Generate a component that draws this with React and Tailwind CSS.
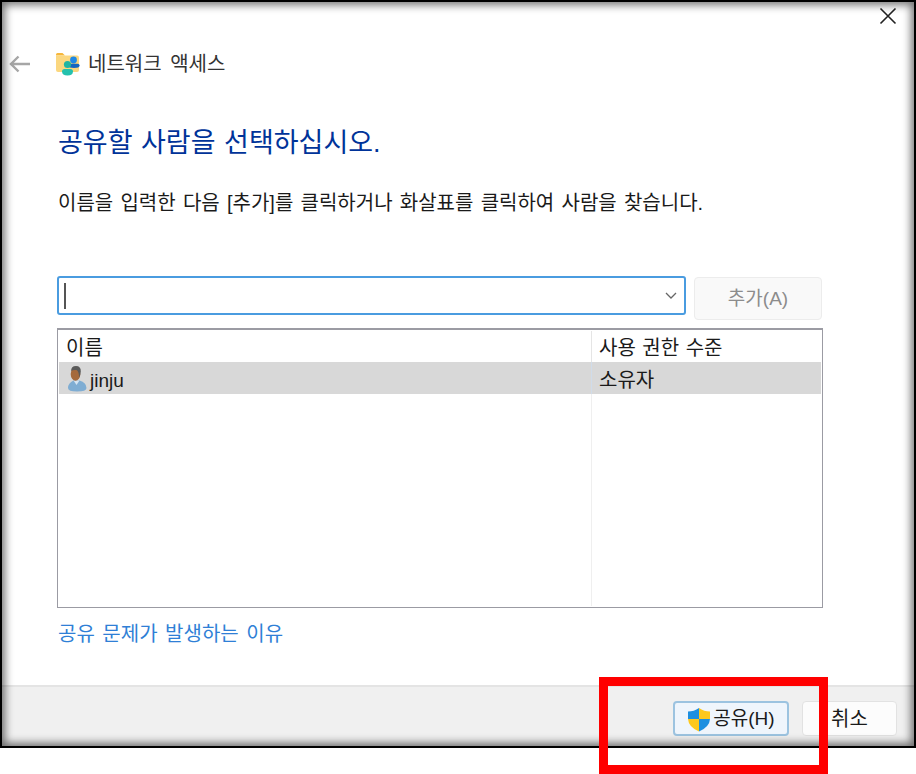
import React from "react";

const font = { fontFamily: '"Liberation Sans", "Noto Sans CJK KR", sans-serif' };

function FolderIcon() {
  return (
    <svg width="26" height="26" viewBox="0 0 26 26">
      <path d="M1 3.5Q1 2 2.5 2H7.5L10 4.5H1Z" fill="#f6b73c" />
      <path d="M1 4.5H22Q24 4.5 24 6.5V19Q24 21 22 21H3Q1 21 1 19Z" fill="#fbd77f" />
      <circle cx="18.5" cy="9" r="3.4" fill="#1e88e5" />
      <path d="M13.5 14.5Q13.5 12.8 15.5 12.8H22.5Q24.6 12.8 24.6 14.5Q24.6 17 19 17Q13.5 17 13.5 14.5Z" fill="#1565c0" />
      <circle cx="12.5" cy="13.5" r="3.6" fill="#1fb5a2" />
      <path d="M7 20.5Q7 18 9.5 18H15.5Q18 18 18 20.5Q18 24.5 12.5 24.5Q7 24.5 7 20.5Z" fill="#25c1ad" />
    </svg>
  );
}

function UserIcon() {
  return (
    <svg width="20" height="27" viewBox="0 0 20 27">
      <path d="M1 23Q1 18 6.5 15.5H12.5Q19.5 17.5 19.5 23Q19.5 26.5 10 26.5Q1 26.5 1 23Z" fill="#7fadd3" />
      <path d="M6.5 15.5L9.5 20L12.5 15.5Z" fill="#d4e4f2" />
      <ellipse cx="8.5" cy="9" rx="4.8" ry="6.8" fill="#a56a3c" />
      <path d="M4.2 6Q4 1 9 1Q14 1 13.8 6.5Q13.6 10 12 12.5Q12.2 6.5 9.5 5Q6 4.5 4.2 6Z" fill="#5a5a5a" />
    </svg>
  );
}

function ShieldIcon() {
  return (
    <svg width="24" height="25" viewBox="0 0 24 25">
      <path d="M12 1Q7 4.5 1 4.5V12H12Z" fill="#1c8fe0" />
      <path d="M12 1Q17 4.5 23 4.5V12H12Z" fill="#fdc81e" />
      <path d="M1 12Q1.5 20 12 24.5V12Z" fill="#fdc81e" />
      <path d="M23 12Q22.5 20 12 24.5V12Z" fill="#1c8fe0" />
    </svg>
  );
}

export default function App() {
  return (
    <div className="relative w-[916px] h-[774px] bg-white overflow-hidden" style={font}>
      <div className="relative h-[748px] bg-white border-2 border-black flex flex-col overflow-hidden">
        <div className="flex justify-end h-[26px] pr-[17px] pt-[5px]">
          <svg width="18" height="18" viewBox="0 0 18 18" fill="none" stroke="#222" strokeWidth="1.6">
            <path d="M1.5 1.5L16.5 16.5M16.5 1.5L1.5 16.5" />
          </svg>
        </div>

        <div className="flex items-center h-[46px] pl-[7px] mt-[13px]">
          <svg width="22" height="18" viewBox="0 0 22 18" fill="none" stroke="#a6a6a6" strokeWidth="2.4">
            <path d="M21 9H2M9.5 1.5L2 9L9.5 16.5" />
          </svg>
          <div className="ml-[24px] w-[26px] h-[26px]"><FolderIcon /></div>
          <span className="ml-[7px] text-[20px] [word-spacing:3px] text-[#333] leading-none">네트워크 액세스</span>
        </div>

        <div className="flex-1 flex flex-col pl-[56px] pr-[92px]">
          <h1 className="mt-[38px] text-[27px] [word-spacing:1px] leading-[36px] text-[#003399] font-normal whitespace-nowrap">공유할 사람을 선택하십시오.</h1>
          <p className="mt-[29px] text-[20px] [word-spacing:1.7px] leading-[26px] text-[#1a1a1a] whitespace-nowrap">
            이름을 입력한 다음 [추가]를 클릭하거나 화살표를 클릭하여 사람을 찾습니다.
          </p>

          <div className="mt-[60px] ml-[-1px] flex h-[40px] gap-[8px]">
            <div className="w-[629px] h-[39px] border-2 border-[#4a9ce0] rounded-[3px] flex items-center justify-between pl-[5px] pr-[7px]">
              <div className="w-[2px] h-[26px] bg-[#555]" />
              <svg width="12" height="8" viewBox="0 0 12 8" fill="none" stroke="#666" strokeWidth="1.3">
                <path d="M1 1L6 6L11 1" />
              </svg>
            </div>
            <div className="mt-[1px] w-[128px] h-[43px] pt-[2px] bg-[#f9f9f9] border border-[#ececec] rounded-[4px] flex items-center justify-center text-[19px] text-[#8c8c8c]">
              추가(A)
            </div>
          </div>

          <div className="mt-[12px] ml-[-1px] w-[766px] h-[280px] border border-[#9b9ba3] border-t-2 p-[1px] flex flex-col">
            <div className="flex h-[31px] text-[20px] [word-spacing:1px] text-[#1a1a1a]">
              <div className="w-[532px] pl-[7px] pt-[2px] flex items-center">이름</div>
              <div className="flex-1 pl-[7px] pt-[2px] flex items-center border-l border-[#e5e5e5]">사용 권한 수준</div>
            </div>
            <div className="flex h-[32px] bg-[#d8d8d8] text-[20px] text-[#1a1a1a]">
              <div className="w-[532px] pl-[8px] flex items-center gap-[3px]">
                <UserIcon />
                <span className="text-[19px] pt-[6px]">jinju</span>
              </div>
              <div className="flex-1 pl-[7px] pt-[4px] flex items-center border-l border-[#d0dcea]">소유자</div>
            </div>
            <div className="flex flex-1">
              <div className="w-[532px]" />
              <div className="flex-1 border-l border-[#efefef]" />
            </div>
          </div>

          <a className="mt-[13px] text-[20px] [word-spacing:2px] leading-[26px] text-[#2f7fd6] whitespace-nowrap">공유 문제가 발생하는 이유</a>
        </div>

        <div className="h-[61px] bg-[#f0f0f0] border-t-2 border-[#e4e4e4] flex justify-end items-start pt-[14px] pr-[17px] gap-[13px]">
          <div className="w-[116px] h-[35px] pt-[1px] bg-[#eff5fc] border-2 border-[#9cc3e0] rounded-[4px] flex items-center justify-center text-[19px] text-[#1a1a1a]">
            <ShieldIcon />
            <span className="ml-[2px]">공유(H)</span>
          </div>
          <div className="w-[95px] h-[35px] pt-[1px] bg-[#fcfcfc] border border-[#e2e2e2] rounded-[4px] flex items-center justify-center text-[20px] text-[#1a1a1a]">
            취소
          </div>
        </div>

        <div className="absolute inset-0 pointer-events-none shadow-[inset_0_0_9px_3px_rgba(0,0,0,0.55)]" />
      </div>

      <div className="absolute left-[599px] top-[677px] w-[229px] h-[97px] border-[9px] border-[#ff0000]" />
    </div>
  );
}
